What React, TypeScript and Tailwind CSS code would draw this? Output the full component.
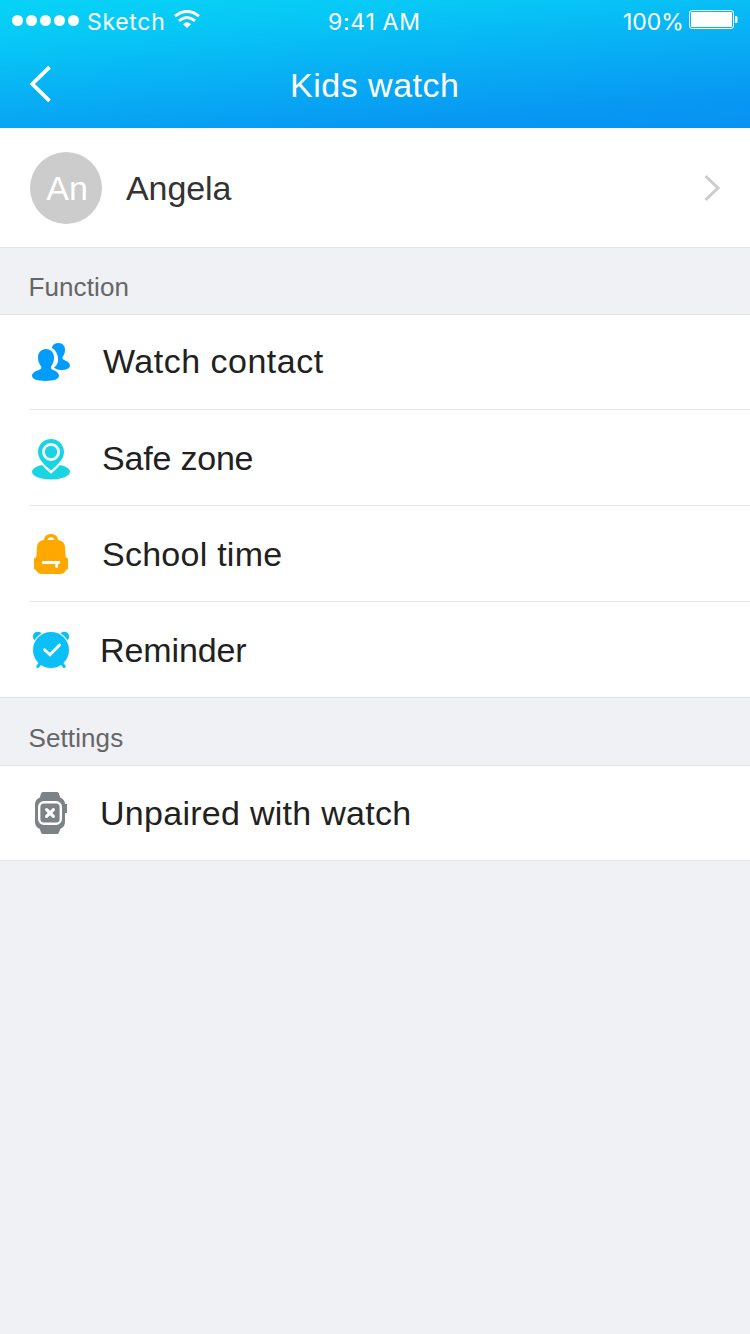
import type { ReactNode } from "react";

function StatusBar() {
  return (
    <div className="flex h-10 items-center font-['Inter','Noto_Sans',sans-serif] text-[23px] font-normal leading-[40px]">
      <div className="flex w-[328px] items-center pl-3">
        <div className="flex gap-[3px]">
          {[0, 1, 2, 3, 4].map((dot) => (
            <span key={dot} className="size-[11px] rounded-full bg-white" />
          ))}
        </div>
        <span className="ml-[8px] mt-[3px] w-[87px] tracking-[0.7px]">Sketch</span>
        <svg className="-mt-[2px]" width="26" height="18" viewBox="0 0 26 18" fill="none">
          <path d="M1 6.2Q13-3.4 25 6.2M5 10.8Q13 4.2 21 10.8" stroke="white" strokeWidth="3" />
          <path d="M9 14.2Q13 10.4 17 14.2L13 18Z" fill="white" />
        </svg>
      </div>
      <span className="mt-[3px] w-[292px] tracking-[0.7px]">9:41 AM</span>
      <span className="mt-[3px] w-[69px] pl-[3px]">100%</span>
      <svg className="-mt-[1px]" width="50" height="20" viewBox="0 0 50 20">
        <rect x="0.5" y="0.5" width="44" height="18" rx="2.5" fill="none" stroke="white" />
        <rect x="2" y="2" width="41" height="15" rx="1" fill="white" />
        <path d="M46 6h1q1.5 0 1.5 1.5v4q0 1.5-1.5 1.5h-1Z" fill="white" />
      </svg>
    </div>
  );
}

function ContactIcon() {
  return (
    <svg width="42" height="44" viewBox="30 340 42 44" fill="#009dff">
      <path d="M58.5 343C62.6 343 65 345.8 65 349.8C65 352.8 64 355.2 62.6 357V358.8C64 360.6 70 361.6 70 365.4C70 368.3 66 370 60.8 370C57.8 370 55.5 369.1 54 367.6C57.2 365.3 58.7 361.7 58 357.5C57.3 353.1 55.3 349.5 51.8 347.7C52.4 344.8 55 343 58.5 343Z" />
      <path d="M46 349C51 349 54 352.5 54 357.6C54 361.3 52.9 364.2 51 366.4V368.4C52.5 370.3 59 371 59 375.8C59 379.2 53.2 381 45.5 381C37.8 381 32 379.2 32 375.8C32 371 39.8 370.3 41.2 368.4V366.4C39.2 364.2 38 361.3 38 357.6C38 352.5 41.2 349 46 349Z" />
    </svg>
  );
}

function ZoneIcon() {
  return (
    <svg width="42" height="44" viewBox="30 437 42 44" fill="#19d5e4">
      <ellipse cx="51" cy="471.7" rx="19" ry="7.8" />
      <path
        d="M51 437.3C43 437.3 36.3 443.9 36.3 452C36.3 459.5 42.4 466.4 51 473.7C59.6 466.4 65.7 459.5 65.7 452C65.7 443.9 59 437.3 51 437.3Z"
        fill="white"
      />
      <path
        fillRule="evenodd"
        d="M51 439C43.5 439 38 444.8 38 452C38 458.7 43.6 464.4 51 470.6C58.4 464.4 64 458.7 64 452C64 444.8 58.5 439 51 439ZM51 443A9 9 0 1 1 51 461A9 9 0 0 1 51 443Z"
      />
      <circle cx="51" cy="452" r="6.2" />
    </svg>
  );
}

function BackpackIcon() {
  return (
    <svg width="42" height="44" viewBox="30 532 42 44" fill="#ffa800">
      <path
        fillRule="evenodd"
        d="M44 540C44 536.3 47.2 534 51 534C54.8 534 58 536.3 58 540C62.5 540.4 65 543.2 65 547.5L65.7 557L68 558.5V569L66 570Q64.5 574 60 574H42Q37.5 574 36 570L34 569V558.5L36.3 557L37 547.5C37 543.2 39.5 540.4 44 540ZM47.5 540H54.5C53.8 538.4 52.7 537.3 51 537.3C49.3 537.3 48.2 538.4 47.5 540Z"
      />
      <path d="M43.2 562.5H58.8M56.7 562.5V566.5" stroke="white" strokeWidth="2.8" strokeLinecap="round" fill="none" />
    </svg>
  );
}

function AlarmIcon() {
  return (
    <svg width="42" height="44" viewBox="30 628 42 44" fill="#0bc0f8">
      <circle cx="37.7" cy="636.5" r="4.8" />
      <circle cx="64.3" cy="636.5" r="4.8" />
      <circle cx="51" cy="650" r="19.2" fill="white" />
      <path d="M40.5 663L37.8 666.5M61.5 663L64.2 666.5" stroke="#0bc0f8" strokeWidth="3" strokeLinecap="round" />
      <circle cx="51" cy="650" r="18" />
      <path d="M44.5 649.8L50 654.8L59.5 645" stroke="white" strokeWidth="2.9" strokeLinecap="round" fill="none" />
    </svg>
  );
}

function WatchIcon() {
  return (
    <svg width="42" height="44" viewBox="30 791 42 44" fill="#7c8387">
      <path d="M43 792H57Q58.5 792 59 793.5L60.2 797.5Q65 799.5 65 804H67V813H65V822Q65 827 60.2 829L59 832.5Q58.5 834 57 834H43Q41.5 834 41 832.5L39.8 829Q35 827 35 822V804Q35 799.5 39.8 797.5L41 793.5Q41.5 792 43 792Z" />
      <rect x="39.2" y="802.2" width="21.6" height="21.6" rx="4.7" fill="none" stroke="white" strokeWidth="2.4" />
      <path d="M46.6 809.6L53.4 816.4M53.4 809.6L46.6 816.4" stroke="white" strokeWidth="3.2" strokeLinecap="round" />
    </svg>
  );
}

interface RowProps {
  icon: ReactNode;
  label: string;
  height: string;
  text: string;
  last?: boolean;
}

function Row({ icon, label, height, text, last }: RowProps) {
  return (
    <div className={height}>
      <div className={last ? "flex h-full items-center pl-[30px]" : "ml-[30px] flex h-full items-center border-b border-[#e3e4e6]"}>
        {icon}
        <span className={`whitespace-nowrap text-[34px] leading-[40px] ${text}`}>{label}</span>
      </div>
    </div>
  );
}

export default function App() {
  return (
    <main className="min-h-[1334px] w-[750px] bg-[#eff1f5] font-['Liberation_Sans',Arial,sans-serif] text-[#212121]">
      <header className="h-32 bg-[linear-gradient(175deg,#07d3f6_0%,#07c8f6_22%,#08aff4_52%,#0897f3_84%,#0792f3_100%)] text-white">
        <StatusBar />
        <div className="flex h-[88px] items-center">
          <svg className="ml-[28px]" width="26" height="40" viewBox="0 0 26 40" fill="none">
            <path d="M21.5 3.2L4.3 20L21.5 36.8" stroke="white" strokeWidth="3.8" />
          </svg>
          <h1 className="ml-[236px] mt-px whitespace-nowrap text-[34px] leading-[40px] tracking-[0.5px]">Kids watch</h1>
        </div>
      </header>

      <section className="flex h-[120px] items-center border-b border-[#e3e4e6] bg-white pl-[30px] pr-[28px]">
        <div className="flex size-[72px] items-center justify-center rounded-full bg-[#ccc] text-[34px] text-white">
          <span className="ml-[2px] leading-[40px]">An</span>
        </div>
        <span className="ml-6 mt-px text-[34px] leading-[40px] tracking-[-0.1px] text-[#333]">Angela</span>
        <svg className="ml-auto" width="18" height="30" viewBox="0 0 18 30" fill="none">
          <path d="M1.5 3L14 15L1.5 27" stroke="#ccc" strokeWidth="3" />
        </svg>
      </section>

      <h2 className="h-[67px] border-b border-[#e3e4e6] pl-[28.5px] pt-[24px] text-[26px] leading-[30px] tracking-[0.1px] text-[#666]">Function</h2>
      <section className="border-b border-[#e3e4e6] bg-white">
        <Row icon={<ContactIcon />} label="Watch contact" height="h-[95px]" text="ml-[31px] -mt-[2px] tracking-[0.5px]" />
        <Row icon={<div className="pt-[2px]"><ZoneIcon /></div>} label="Safe zone" height="h-24" text="ml-[30px] mt-px tracking-[-0.2px]" />
        <Row icon={<BackpackIcon />} label="School time" height="h-24" text="ml-[30px] mt-px tracking-[0.25px]" />
        <Row icon={<AlarmIcon />} label="Reminder" height="h-[95px]" text="ml-[28px] mt-px tracking-[-0.1px]" last />
      </section>

      <h2 className="h-[68px] border-b border-[#e3e4e6] pl-[28.5px] pt-[25px] text-[26px] leading-[30px] tracking-[0.1px] text-[#666]">Settings</h2>
      <section className="border-b border-[#e3e4e6] bg-white">
        <Row icon={<WatchIcon />} label="Unpaired with watch" height="h-[94px]" text="ml-[28px] -mt-px tracking-[0.28px]" last />
      </section>
    </main>
  );
}
